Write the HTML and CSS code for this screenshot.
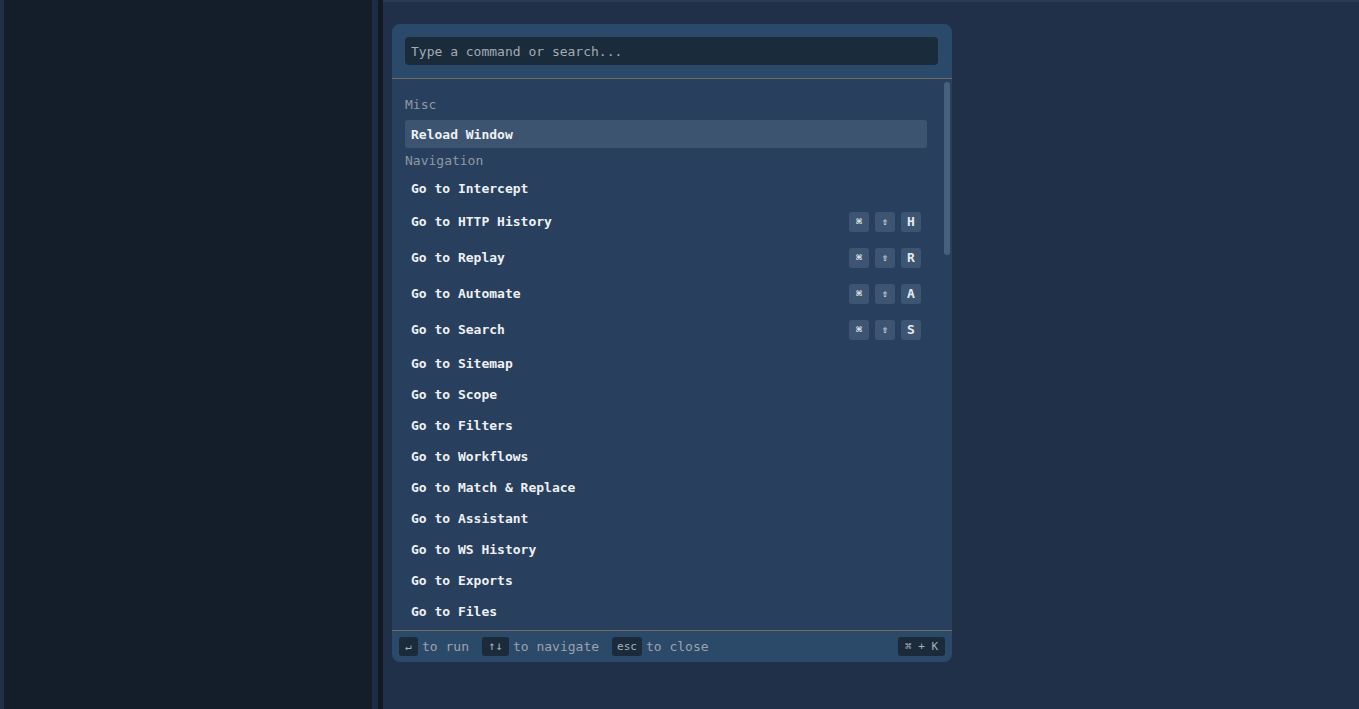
FILE: index.html
```html
<!DOCTYPE html>
<html lang="en">
<head>
    <meta charset="UTF-8">
    <meta name="viewport" content="width=device-width, initial-scale=1.0">
    <title>Command Palette</title>
    <link rel="stylesheet" href="styles.css">
</head>
<body>

    <div class="app">
        <div class="edge"></div>
        <div class="sidebar"></div>
        <div class="splitter"></div>
        <div class="gutter"></div>

        <div class="main">
            <div class="palette">
                <div class="palette-head">
                    <input type="text" class="search" placeholder="Type a command or search...">
                </div>

                <div class="palette-list">
                    <div class="scroll-thumb"></div>

                    <div class="group-label first">Misc</div>
                    <div class="item active">Reload Window</div>

                    <div class="group-label">Navigation</div>
                    <div class="item">Go to Intercept</div>
                    <div class="item keyed">Go to HTTP History
                        <span class="keys"><kbd class="sym">⌘</kbd><kbd class="sym">⇧</kbd><kbd>H</kbd></span>
                    </div>
                    <div class="item keyed">Go to Replay
                        <span class="keys"><kbd class="sym">⌘</kbd><kbd class="sym">⇧</kbd><kbd>R</kbd></span>
                    </div>
                    <div class="item keyed">Go to Automate
                        <span class="keys"><kbd class="sym">⌘</kbd><kbd class="sym">⇧</kbd><kbd>A</kbd></span>
                    </div>
                    <div class="item keyed">Go to Search
                        <span class="keys"><kbd class="sym">⌘</kbd><kbd class="sym">⇧</kbd><kbd>S</kbd></span>
                    </div>
                    <div class="item">Go to Sitemap</div>
                    <div class="item">Go to Scope</div>
                    <div class="item">Go to Filters</div>
                    <div class="item">Go to Workflows</div>
                    <div class="item">Go to Match &amp; Replace</div>
                    <div class="item">Go to Assistant</div>
                    <div class="item">Go to WS History</div>
                    <div class="item">Go to Exports</div>
                    <div class="item">Go to Files</div>
                </div>

                <div class="palette-foot">
                    <span class="hint"><kbd class="fkey">↵</kbd><span>to run</span></span>
                    <span class="hint"><kbd class="fkey arrows">↑↓</kbd><span>to navigate</span></span>
                    <span class="hint"><kbd class="fkey">esc</kbd><span>to close</span></span>
                    <kbd class="fkey combo">⌘ + K</kbd>
                </div>
            </div>
        </div>
    </div>

</body>
</html>
```

FILE: styles.css
```css
* {
    box-sizing: border-box;
}
body {
    margin: 0;
    height: 709px;
    overflow: hidden;
    background-color: #1f3048;
    font-family: "DejaVu Sans Mono", "Liberation Mono", monospace;
    font-size: 13px;
}
.app {
    display: flex;
    height: 100%;
}
.edge {
    width: 4px;
    background-color: #1f3048;
}
.sidebar {
    width: 368px;
    background-color: #131e2a;
}
.splitter {
    width: 6px;
    background-color: #1c2d43;
}
.gutter {
    width: 5px;
    background-color: #111a24;
}
.main {
    flex: 1;
    background-color: #1f3048;
    border-top: 2px solid #2a3b53;
    padding: 22px 0 0 9px;
}
.palette {
    width: 560px;
    height: 638px;
    display: flex;
    flex-direction: column;
    background-color: #2b4969;
    border-radius: 8px;
    overflow: hidden;
}
.palette-head {
    padding: 13px 14px 13px 13px;
    border-bottom: 1px solid #6e6b60;
}
.search {
    width: 100%;
    height: 28px;
    padding: 0 6px;
    border: none;
    border-radius: 4px;
    background-color: #1a2b3c;
    color: #d9dee3;
    font-family: inherit;
    font-size: 13px;
    outline: none;
}
.search::placeholder {
    color: #a3abb3;
}
.palette-list {
    position: relative;
    flex: 1;
    overflow: hidden;
    padding: 16px 25px 0 13px;
    background-color: #283f5d;
    display: flex;
    flex-direction: column;
    gap: 3px;
}
.scroll-thumb {
    position: absolute;
    top: 3px;
    right: 2px;
    width: 6px;
    height: 173px;
    border-radius: 3px;
    background-color: #48607e;
}
.group-label {
    height: 20px;
    line-height: 20px;
    color: #8f99a4;
    flex-shrink: 0;
}
.group-label.first {
    margin-bottom: 2px;
}
.item {
    flex-shrink: 0;
    height: 28px;
    display: flex;
    align-items: center;
    justify-content: space-between;
    padding: 0 6px;
    border-radius: 3px;
    color: #eef1f4;
    font-weight: bold;
}
.item.keyed {
    height: 33px;
}
.item.active {
    background-color: #3d5470;
}
.keys {
    display: flex;
    gap: 6px;
}
kbd {
    font-family: inherit;
}
.keys kbd {
    width: 20px;
    height: 20px;
    display: flex;
    align-items: center;
    justify-content: center;
    border-radius: 3px;
    background-color: #3d5572;
    color: #e6eaee;
    font-size: 13px;
    font-weight: bold;
}
.keys kbd.sym {
    font-size: 10px;
}
.palette-foot {
    height: 32px;
    display: flex;
    align-items: center;
    padding: 0 7px 1px;
    border-top: 1px solid #6e6b60;
    color: #9ba4ae;
}
.hint {
    display: flex;
    align-items: center;
    gap: 4px;
    margin-right: 13px;
}
.fkey {
    height: 19px;
    min-width: 19px;
    padding: 0 5px;
    display: flex;
    align-items: center;
    justify-content: center;
    border-radius: 3px;
    background-color: #1b2b3c;
    color: #aab2ba;
    font-size: 11px;
}
.fkey.arrows {
    font-size: 12px;
    width: 27px;
    padding: 0;
}
.fkey.combo {
    margin-left: auto;
    width: 47px;
}
```
